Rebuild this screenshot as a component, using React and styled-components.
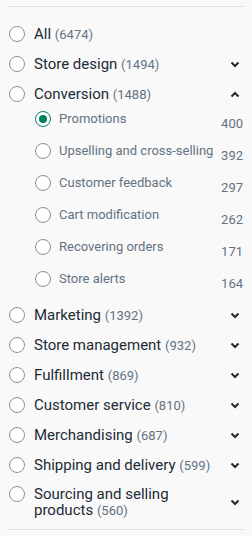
import React from 'react'
import styled, { createGlobalStyle } from 'styled-components'

const GlobalStyle = createGlobalStyle`
  html, body {
    margin: 0;
    padding: 0;
    background: #f9f9f9;
  }
  body {
    font-family: Roboto, "Liberation Sans", sans-serif;
    color: #212b36;
  }
`

const Panel = styled.div`
  padding: 6px 9px 0 9px;
  width: 252px;
  box-sizing: border-box;
`

const List = styled.div`
  border-top: 1px solid #dcdde4;
  border-bottom: 1px solid #dcdde4;
  padding-top: 12px;
  padding-bottom: 6px;
`

const Row = styled.div`
  display: flex;
  align-items: ${p => (p.$tall ? 'flex-start' : 'center')};
  min-height: 30px;
  padding: ${p => (p.$tall ? '6px 0 4px' : '0')};
  box-sizing: border-box;
`

const Radio = styled.span`
  flex: none;
  width: 16px;
  height: 16px;
  box-sizing: border-box;
  border-radius: 50%;
  border: 1.5px solid ${p => (p.$checked ? '#008060' : '#8c9196')};
  background: #fff;
  display: flex;
  align-items: center;
  justify-content: center;
  &::after {
    content: '';
    display: ${p => (p.$checked ? 'block' : 'none')};
    width: 8px;
    height: 8px;
    border-radius: 50%;
    background: #008060;
  }
`

const Label = styled.span`
  flex: 1;
  margin-left: 9px;
  font-size: 15px;
  font-weight: 400;
  line-height: 16px;
  color: #212b36;
`

const Count = styled.span`
  font-size: 13px;
  font-weight: 400;
  color: #637381;
`

const Chevron = styled.span`
  flex: none;
  width: 16px;
  display: flex;
  justify-content: center;
  align-self: center;
`

const SubList = styled.div`
  margin-top: -3px;
  margin-bottom: 2px;
  padding-left: 26px;
`

const SubRow = styled.div`
  display: flex;
  align-items: flex-start;
  height: 32px;
  padding-top: 5px;
  box-sizing: border-box;
`

const SubLabel = styled.span`
  flex: 1;
  margin-left: 8px;
  font-size: 13px;
  line-height: 16px;
  color: #637381;
  white-space: nowrap;
`

const SubCount = styled.span`
  margin-top: 5px;
  font-size: 13px;
  line-height: 16px;
  color: #637381;
  text-align: right;
`

const Arrow = ({ up }) => (
  <svg width="10" height="7" viewBox="0 0 10 7">
    <polyline
      points={up ? '1.5,5.5 5,2 8.5,5.5' : '1.5,1.5 5,5 8.5,1.5'}
      fill="none"
      stroke="#212b36"
      strokeWidth="2"
    />
  </svg>
)

const categories = [
  { name: 'All', count: 6474, arrow: false },
  { name: 'Store design', count: 1494 },
  {
    name: 'Conversion',
    count: 1488,
    open: true,
    subs: [
      { name: 'Promotions', count: 400, checked: true },
      { name: 'Upselling and cross-selling', count: 392 },
      { name: 'Customer feedback', count: 297 },
      { name: 'Cart modification', count: 262 },
      { name: 'Recovering orders', count: 171 },
      { name: 'Store alerts', count: 164 }
    ]
  },
  { name: 'Marketing', count: 1392 },
  { name: 'Store management', count: 932 },
  { name: 'Fulfillment', count: 869 },
  { name: 'Customer service', count: 810 },
  { name: 'Merchandising', count: 687 },
  { name: 'Shipping and delivery', count: 599 },
  { name: 'Sourcing and selling products', count: 560, tall: true }
]

export default function App () {
  return (
    <Panel>
      <GlobalStyle />
      <List>
        {categories.map(c => (
          <React.Fragment key={c.name}>
            <Row $tall={c.tall}>
              <Radio />
              <Label>
                {c.name} <Count>({c.count})</Count>
              </Label>
              {c.arrow !== false && (
                <Chevron>
                  <Arrow up={c.open} />
                </Chevron>
              )}
            </Row>
            {c.open && (
              <SubList>
                {c.subs.map(s => (
                  <SubRow key={s.name}>
                    <Radio $checked={s.checked} />
                    <SubLabel>{s.name}</SubLabel>
                    <SubCount>{s.count}</SubCount>
                  </SubRow>
                ))}
              </SubList>
            )}
          </React.Fragment>
        ))}
      </List>
    </Panel>
  )
}
